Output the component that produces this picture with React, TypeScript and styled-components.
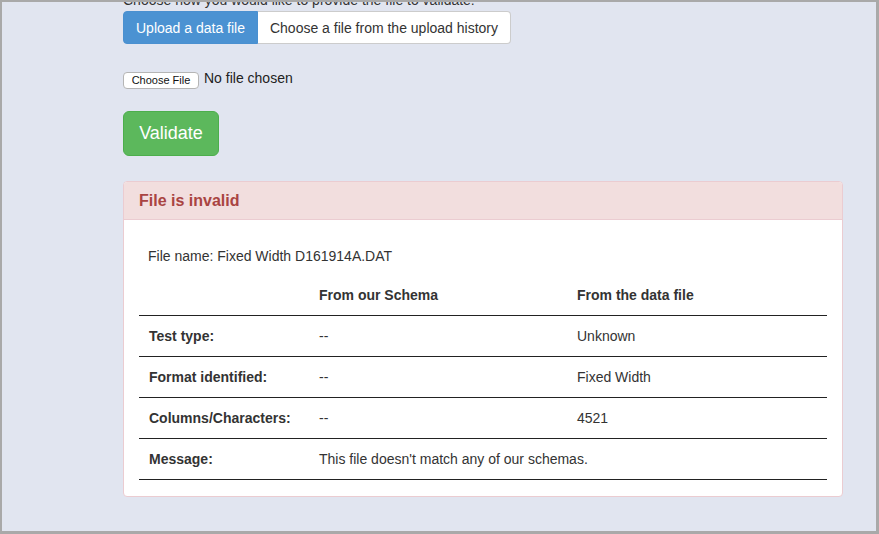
import styled, { createGlobalStyle } from 'styled-components'

const GlobalStyle = createGlobalStyle`
  html, body {
    margin: 0;
    padding: 0;
  }
  body {
    font-family: "Liberation Sans", Arial, sans-serif;
    font-size: 14px;
    line-height: 20px;
    color: #333;
  }
`

const Frame = styled.div`
  box-sizing: border-box;
  width: 879px;
  height: 534px;
  overflow: hidden;
  background: #e1e5f0;
  border-style: solid;
  border-color: #a9a9a9;
  border-width: 2px 3px 3px 2px;
`

const Content = styled.div`
  margin-top: -12px;
  padding-left: 121px;
  width: 720px;
  display: flex;
  flex-direction: column;
  align-items: flex-start;
`

const Prompt = styled.label`
  display: block;
  margin-bottom: 1px;
`

const ButtonGroup = styled.div`
  display: flex;
`

const ToggleButton = styled.button<{ $active?: boolean }>`
  font-family: inherit;
  font-size: 14px;
  line-height: 20px;
  padding: 6px 12px;
  height: 33px;
  border: 1px solid ${(p) => (p.$active ? '#4a90d0' : '#ccc')};
  background: ${(p) => (p.$active ? '#4b92d2' : '#fff')};
  color: ${(p) => (p.$active ? '#fff' : '#333')};
  cursor: pointer;

  &:first-child {
    border-radius: 4px 0 0 4px;
  }
  &:last-child {
    border-radius: 0 4px 4px 0;
    border-left: none;
  }
`

const FileRow = styled.div`
  display: flex;
  align-items: center;
  gap: 5px;
  margin-top: 28px;
`

const FileButton = styled.button`
  font-family: "Liberation Sans", Arial, sans-serif;
  font-size: 11px;
  line-height: 13px;
  height: 17px;
  width: 76px;
  padding: 0;
  background: #fff;
  border: 1px solid #b5b5b5;
  border-radius: 4px;
  color: #111;
`

const FileStatus = styled.span`
  font-size: 14px;
  margin-top: -6px;
  color: #222;
`

const ValidateButton = styled.button`
  margin-top: 22px;
  font-family: inherit;
  font-size: 18px;
  line-height: 23px;
  height: 45px;
  width: 96px;
  padding: 10px 0;
  border: 1px solid #4cae4c;
  border-radius: 6px;
  background: #5cb85c;
  color: #fff;
`

const Panel = styled.section`
  box-sizing: border-box;
  margin-top: 25px;
  width: 720px;
  background: #fff;
  border: 1px solid #ebccd1;
  border-radius: 4px;
`

const PanelHeading = styled.div`
  padding: 10px 15px;
  height: 38px;
  box-sizing: border-box;
  background: #f2dede;
  border-bottom: 1px solid #ebccd1;
  border-radius: 3px 3px 0 0;
  color: #a94442;
  font-size: 16px;
  font-weight: bold;
  line-height: 18px;
`

const PanelBody = styled.div`
  padding: 15px 15px 16px;
`

const FileName = styled.p`
  margin: 11px 0 9px;
  padding-left: 9px;
`

const Table = styled.table`
  width: 688px;
  border-collapse: collapse;
  table-layout: fixed;
`

const Cell = styled.td<{ $width?: number; $bold?: boolean }>`
  width: ${(p) => (p.$width ? `${p.$width}px` : 'auto')};
  padding: 10px;
  height: 20px;
  line-height: 20px;
  font-weight: ${(p) => (p.$bold ? 'bold' : 'normal')};
  border-bottom: 1px solid #222;
  text-align: left;
  vertical-align: middle;
`

const rows = [
  { label: 'Test type:', schema: '--', data: 'Unknown' },
  { label: 'Format identified:', schema: '--', data: 'Fixed Width' },
  { label: 'Columns/Characters:', schema: '--', data: '4521' },
]

export default function App() {
  return (
    <>
      <GlobalStyle />
      <Frame>
        <Content>
          <Prompt>Choose how you would like to provide the file to validate:</Prompt>
          <ButtonGroup>
            <ToggleButton $active>Upload a data file</ToggleButton>
            <ToggleButton>Choose a file from the upload history</ToggleButton>
          </ButtonGroup>
          <FileRow>
            <FileButton>Choose File</FileButton>
            <FileStatus>No file chosen</FileStatus>
          </FileRow>
          <ValidateButton>Validate</ValidateButton>
          <Panel>
            <PanelHeading>File is invalid</PanelHeading>
            <PanelBody>
              <FileName>File name: Fixed Width D161914A.DAT</FileName>
              <Table>
                <thead>
                  <tr>
                    <Cell as="th" $width={150} $bold />
                    <Cell as="th" $width={238} $bold>From our Schema</Cell>
                    <Cell as="th" $bold>From the data file</Cell>
                  </tr>
                </thead>
                <tbody>
                  {rows.map((r) => (
                    <tr key={r.label}>
                      <Cell $bold>{r.label}</Cell>
                      <Cell>{r.schema}</Cell>
                      <Cell>{r.data}</Cell>
                    </tr>
                  ))}
                  <tr>
                    <Cell $bold>Message:</Cell>
                    <Cell colSpan={2}>This file doesn't match any of our schemas.</Cell>
                  </tr>
                </tbody>
              </Table>
            </PanelBody>
          </Panel>
        </Content>
      </Frame>
    </>
  )
}
